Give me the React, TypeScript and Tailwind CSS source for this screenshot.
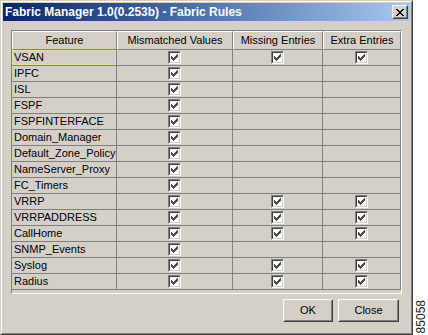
import React from 'react';

const features = [
  { nome: 'VSAN', mismatched: true, missing: true, extra: true },
  { nome: 'IPFC', mismatched: true, missing: false, extra: false },
  { nome: 'ISL', mismatched: true, missing: false, extra: false },
  { nome: 'FSPF', mismatched: true, missing: false, extra: false },
  { nome: 'FSPFINTERFACE', mismatched: true, missing: false, extra: false },
  { nome: 'Domain_Manager', mismatched: true, missing: false, extra: false },
  { nome: 'Default_Zone_Policy', mismatched: true, missing: false, extra: false },
  { nome: 'NameServer_Proxy', mismatched: true, missing: false, extra: false },
  { nome: 'FC_Timers', mismatched: true, missing: false, extra: false },
  { nome: 'VRRP', mismatched: true, missing: true, extra: true },
  { nome: 'VRRPADDRESS', mismatched: true, missing: true, extra: true },
  { nome: 'CallHome', mismatched: true, missing: true, extra: true },
  { nome: 'SNMP_Events', mismatched: true, missing: false, extra: false },
  { nome: 'Syslog', mismatched: true, missing: true, extra: true },
  { nome: 'Radius', mismatched: true, missing: true, extra: true },
];

// classic 7x7 check glyph
const checkPixels = [
  '......X',
  '.....XX',
  'X...XXX',
  'XX.XXX.',
  'XXXXX..',
  '.XXX...',
  '..X....',
];

function Checkbox() {
  return (
    <span className="inline-block w-[13px] h-[13px] border border-t-[#808080] border-l-[#808080] border-r-white border-b-white">
      <span className="flex items-center justify-center w-full h-full border border-t-[#404040] border-l-[#404040] border-r-[#d4d0c8] border-b-[#d4d0c8] bg-white">
        <svg width="7" height="7" viewBox="0 0 7 7" shapeRendering="crispEdges">
          {checkPixels.map((row, y) =>
            row.split('').map((c, x) =>
              c === 'X' ? <rect key={`${x}-${y}`} x={x} y={y} width="1" height="1" fill="#4a4a4a" /> : null
            )
          )}
        </svg>
      </span>
    </span>
  );
}

function HeaderCell({ label, width }: { label: string; width: string }) {
  return (
    <div className={`${width} h-full flex items-center justify-center border-t border-l border-t-white border-l-white border-r border-b border-r-[#808080] border-b-[#808080]`}>
      {label}
    </div>
  );
}

function Button({ label, width }: { label: string; width: string }) {
  return (
    <div className={`${width} h-[23px] border border-t-white border-l-white border-r-[#404040] border-b-[#404040]`}>
      <div className="w-full h-full flex items-center justify-center border border-t-[#d4d0c8] border-l-[#d4d0c8] border-r-[#808080] border-b-[#808080] text-[11px]">
        {label}
      </div>
    </div>
  );
}

export default function App() {
  return (
    <div className="flex w-[428px] h-[335px] bg-white overflow-hidden text-black" style={{ fontFamily: '"Liberation Sans", Arial, sans-serif' }}>
      {/* window */}
      <div className="w-[413px] h-[335px] shrink-0 border border-t-[#d4d0c8] border-l-[#d4d0c8] border-r-[#404040] border-b-[#404040] bg-[#d4d0c8]">
        <div className="w-full h-full border border-t-white border-l-white border-r-[#808080] border-b-[#808080] p-px flex flex-col">
          {/* title bar */}
          <div className="h-[18px] shrink-0 flex items-center justify-between bg-linear-to-r from-[#0a246a] to-[#a6caf0] pl-[2px] pr-[2px]">
            <span className="text-white font-bold text-[12px] leading-none">Fabric Manager 1.0(0.253b) - Fabric Rules</span>
            <div className="w-[16px] h-[14px] border border-t-white border-l-white border-r-[#404040] border-b-[#404040] bg-[#d4d0c8]">
              <div className="w-full h-full border border-t-[#d4d0c8] border-l-[#d4d0c8] border-r-[#808080] border-b-[#808080] flex items-center justify-center">
                <svg width="8" height="7" viewBox="0 0 8 7" shapeRendering="crispEdges">
                  <path d="M0 0h2v1h-2zM6 0h2v1h-2zM1 1h2v1h-2zM5 1h2v1h-2zM2 2h4v1h-4zM3 3h2v1h-2zM2 4h4v1h-4zM1 5h2v1h-2zM5 5h2v1h-2zM0 6h2v1h-2zM6 6h2v1h-2z" fill="#000" />
                </svg>
              </div>
            </div>
          </div>

          {/* table pane */}
          <div className="mt-[9px] ml-[8px] w-[391px] h-[264px] border border-t-[#808080] border-l-[#808080] border-r-white border-b-white text-[11px]">
            <div className="flex h-[19px]">
              <HeaderCell label="Feature" width="w-[105px]" />
              <HeaderCell label="Mismatched Values" width="w-[116px]" />
              <HeaderCell label="Missing Entries" width="w-[90px]" />
              <HeaderCell label="Extra Entries" width="w-[78px]" />
            </div>
            {features.map((f, i) => (
              <div key={f.nome} className="flex h-[16px] border-b border-b-[#808080]">
                <div className={`w-[105px] h-full flex items-center pl-[2px] border-r border-r-[#808080] ${i === 0 ? 'shadow-[inset_0_0_0_1px_#e4e0a0]' : ''}`}>
                  {f.nome}
                </div>
                <div className="w-[116px] h-full flex items-center justify-center border-r border-r-[#808080]">
                  {f.mismatched && <Checkbox />}
                </div>
                <div className="w-[90px] h-full flex items-center justify-center border-r border-r-[#808080]">
                  {f.missing && <Checkbox />}
                </div>
                <div className="w-[78px] h-full flex items-center justify-center border-r border-r-[#808080]">
                  {f.extra && <Checkbox />}
                </div>
              </div>
            ))}
          </div>

          {/* buttons */}
          <div className="flex justify-end gap-[5px] mt-[5px] pr-[11px]">
            <Button label="OK" width="w-[50px]" />
            <Button label="Close" width="w-[61px]" />
          </div>
        </div>
      </div>

      {/* figure number */}
      <div className="flex-1 flex items-end justify-center pb-[2px]">
        <span className="[writing-mode:vertical-rl] rotate-180 text-[12px] leading-none text-[#222]">85058</span>
      </div>
    </div>
  );
}
